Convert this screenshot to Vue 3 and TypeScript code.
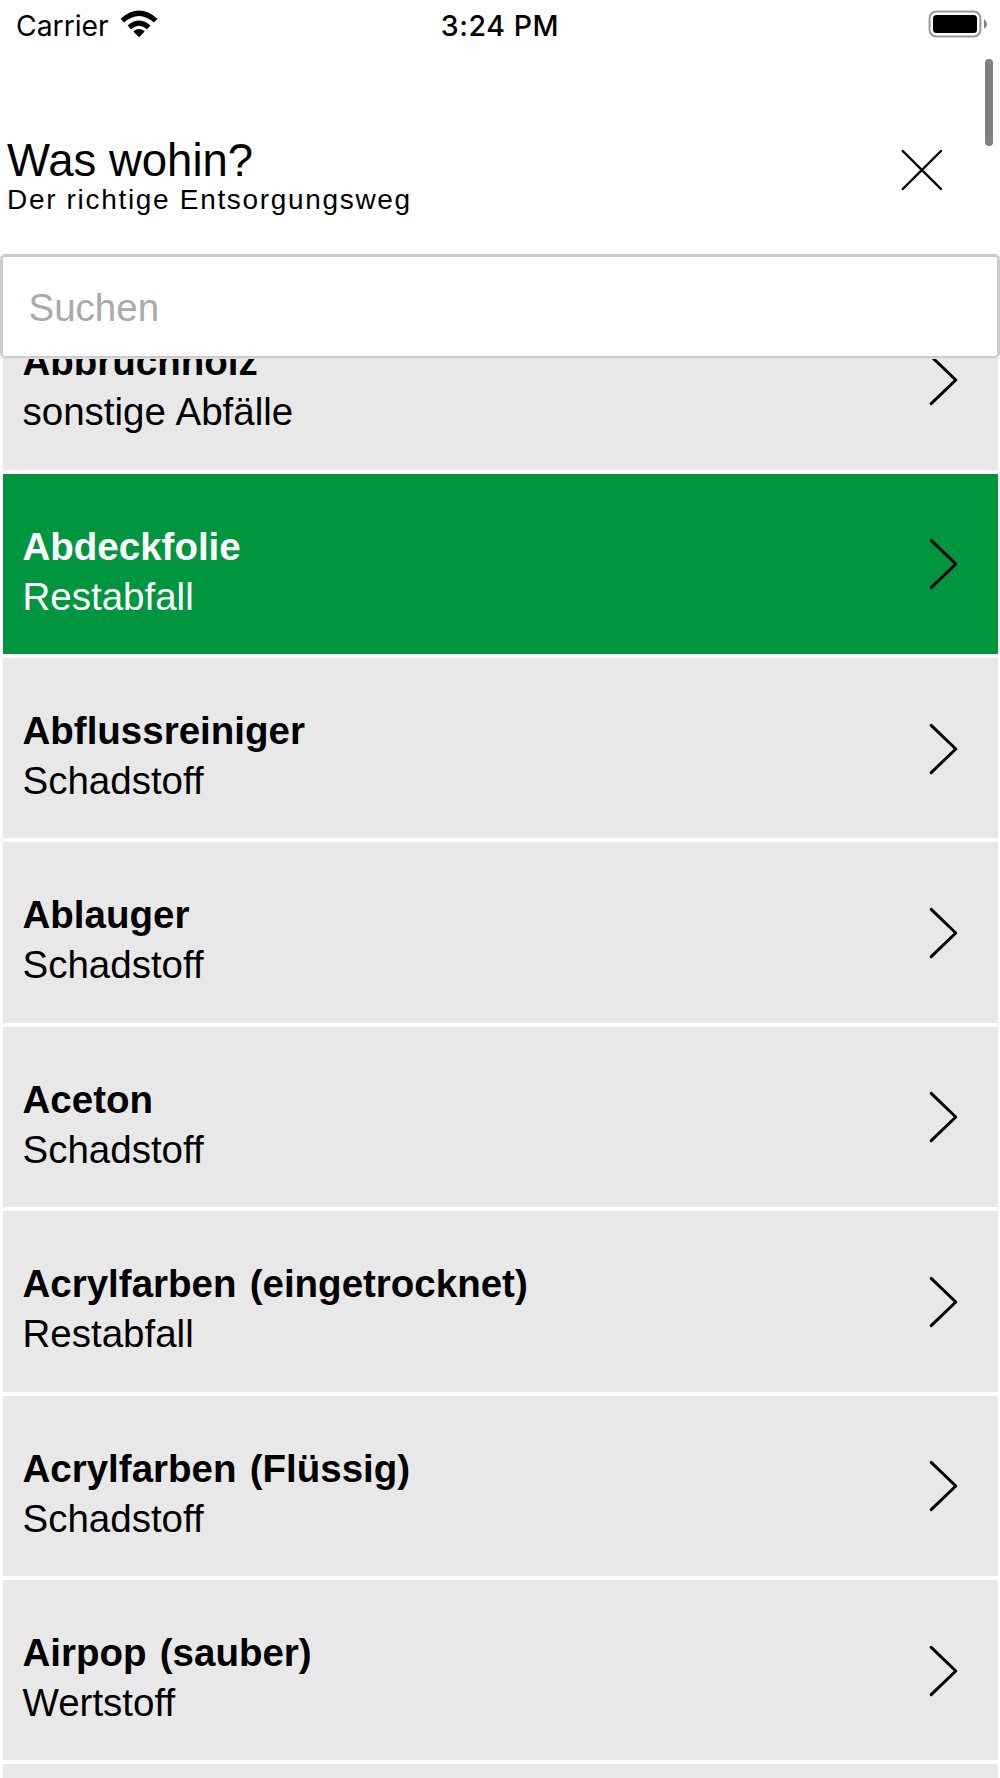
<script setup lang="ts">
interface Entry {
  name: string
  category: string
  selected?: boolean
}

const entries: Entry[] = [
  { name: 'Abbruchholz', category: 'sonstige Abfälle' },
  { name: 'Abdeckfolie', category: 'Restabfall', selected: true },
  { name: 'Abflussreiniger', category: 'Schadstoff' },
  { name: 'Ablauger', category: 'Schadstoff' },
  { name: 'Aceton', category: 'Schadstoff' },
  { name: 'Acrylfarben (eingetrocknet)', category: 'Restabfall' },
  { name: 'Acrylfarben (Flüssig)', category: 'Schadstoff' },
  { name: 'Airpop (sauber)', category: 'Wertstoff' },
  { name: '', category: '' },
]
</script>

<template>
  <main class="screen">
    <div class="status">
      <div class="carrier">
        <span>Carrier</span>
        <svg class="wifi" width="38" height="28" viewBox="0 0 38 28">
          <path d="M19 27.2 13.3 21.4Q19 16.6 24.7 21.4Z" />
          <path d="M9.2 17.4Q19 8.8 28.8 17.4" fill="none" stroke="#000" stroke-width="5" />
          <path d="M2.3 10.6Q19 -4.2 35.7 10.6" fill="none" stroke="#000" stroke-width="5.2" />
        </svg>
      </div>
      <time class="time">3:24 PM</time>
      <svg class="battery" width="60" height="28" viewBox="0 0 60 28">
        <rect x="1.6" y="1.6" width="50.8" height="24.8" rx="6.5" fill="none" stroke="#999" stroke-width="2" />
        <rect x="5" y="5" width="44" height="18" rx="3.5" />
        <path d="M56 9.3Q59 11 59 14T56 18.7Z" fill="#808080" />
      </svg>
    </div>
    <div class="scrollbar"></div>

    <header class="header">
      <div>
        <h1>Was wohin?</h1>
        <p>Der richtige Entsorgungsweg</p>
      </div>
      <svg class="close" width="42" height="42" viewBox="0 0 42 42">
        <path d="M1.6 1.9 40.1 40.1M40.1 1.9 1.6 40.1" />
      </svg>
    </header>

    <input class="search" type="text" placeholder="Suchen" />

    <div class="viewport">
      <ul class="list">
        <li v-for="(entry, i) in entries" :key="i" :class="['row', { selected: entry.selected }]">
          <div>
            <div class="name">{{ entry.name }}</div>
            <div class="category">{{ entry.category }}</div>
          </div>
          <svg class="chevron" width="30" height="52" viewBox="0 0 30 52">
            <path d="M2.2 2.4 26.8 26 2.2 49.6" />
          </svg>
        </li>
      </ul>
    </div>
  </main>
</template>

<style>
body {
  margin: 0;
  overflow: hidden;
}
</style>

<style scoped>
.screen {
  position: relative;
  display: flex;
  flex-direction: column;
  width: 1000px;
  height: 1778px;
  overflow: hidden;
  background: #fff;
  color: #000;
  font-family: "Liberation Sans", Arial, sans-serif;
}
.status {
  display: grid;
  grid-template-columns: 1fr auto 1fr;
  align-items: center;
  flex: none;
  height: 51px;
  padding: 0 16px;
  box-sizing: border-box;
  font-family: Inter, sans-serif;
  font-size: 28.3px;
}
.carrier {
  display: flex;
  align-items: center;
  gap: 11px;
}
.wifi {
  margin-bottom: 3px;
}
.time {
  font-size: 28.5px;
  font-weight: 500;
  letter-spacing: 0.6px;
}
.battery {
  justify-self: end;
  margin: 0 -4px 3px 0;
}
.scrollbar {
  position: absolute;
  top: 59px;
  left: 985px;
  width: 8px;
  height: 87px;
  border-radius: 4px;
  background: #808080;
}
.header {
  display: flex;
  justify-content: space-between;
  flex: none;
  box-sizing: border-box;
  height: 203px;
  padding: 83px 57px 0 7px;
}
h1 {
  margin: 0;
  padding-top: 1px;
  font-size: 45.5px;
  line-height: 51px;
  font-weight: 400;
}
p {
  margin: -1px 0 0;
  font-size: 28px;
  line-height: 30px;
  letter-spacing: 1.68px;
}
.close {
  margin-top: 15px;
}
.close path,
.chevron path {
  fill: none;
  stroke: #000;
  stroke-width: 2.2;
  stroke-linecap: round;
}
.search {
  display: block;
  flex: none;
  box-sizing: border-box;
  width: 1000px;
  height: 104px;
  margin: 0;
  padding: 3px 25.5px 0;
  border: 3px solid #ccc;
  border-bottom-width: 2px;
  border-radius: 5px;
  outline: none;
  background: #fff;
  font: 38.5px "Liberation Sans", Arial, sans-serif;
}
.search::placeholder {
  color: #aaa;
}
.viewport {
  flex: 1;
  min-height: 0;
  overflow: hidden;
  border-top: 1px solid #e2e2e2;
}
.list {
  display: flex;
  flex-direction: column;
  gap: 4px;
  margin: -69.9px 2.5px 0;
  padding: 0;
  list-style: none;
}
.row {
  display: flex;
  justify-content: space-between;
  align-items: flex-start;
  flex: none;
  box-sizing: border-box;
  height: 180.43px;
  padding: 48px 39px 0 20px;
  background: #e8e8e8;
}
.selected {
  background: #00963f;
  color: #fff;
}
.name,
.category {
  height: 50px;
  font-size: 38.5px;
  line-height: 50px;
  white-space: nowrap;
  word-spacing: 1px;
}
.name {
  font-weight: 700;
  word-spacing: 2.5px;
}
.chevron {
  margin-top: 16.6px;
}
.chevron path {
  stroke-width: 3;
  stroke-linejoin: round;
}
</style>
